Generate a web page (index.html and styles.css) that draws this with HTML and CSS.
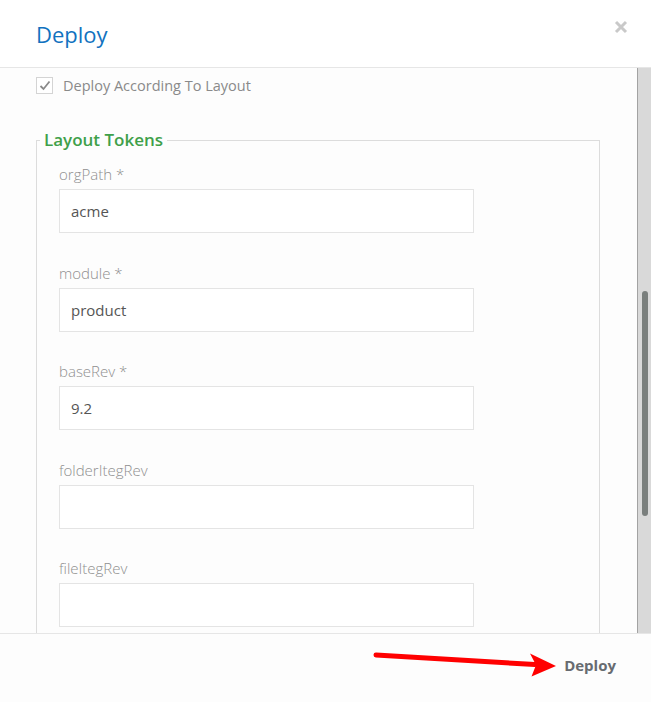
FILE: index.html
```html
<!DOCTYPE html>
<html>
<head>
<meta charset="utf-8">
<link rel="stylesheet" href="styles.css">
</head>
<body>
<div class="modal">
  <div class="header">
    <h1 class="title">Deploy</h1>
    <svg class="close" width="14" height="14" viewBox="0 0 14 14"><path d="M2 2L12 12M12 2L2 12" stroke="#c9c9c9" stroke-width="3" stroke-linecap="butt"/></svg>
  </div>
  <div class="body">
    <div class="content">
      <div class="check-row">
        <span class="checkbox"><svg width="12" height="11" viewBox="0 0 12 11"><path d="M1.5 6L4.5 9L10.5 1.5" fill="none" stroke="#8a8a8a" stroke-width="1.8"/></svg></span>
        <span class="check-label">Deploy According To Layout</span>
      </div>
      <fieldset class="tokens">
        <legend class="legend">Layout Tokens</legend>
        <div class="field"><label class="label">orgPath *</label><div class="input">acme</div></div>
        <div class="field"><label class="label">module *</label><div class="input">product</div></div>
        <div class="field"><label class="label">baseRev *</label><div class="input">9.2</div></div>
        <div class="field"><label class="label">folderItegRev</label><div class="input"></div></div>
        <div class="field"><label class="label">fileItegRev</label><div class="input"></div></div>
      </fieldset>
    </div>
    <div class="scrollbar"><div class="thumb"></div></div>
  </div>
  <div class="footer">
    <span class="deploy-btn">Deploy</span>
    <svg class="arrow" width="200" height="40" viewBox="0 0 200 40"><path d="M16 15L175 24.5" stroke="#ff0000" stroke-width="5" stroke-linecap="round"/><path d="M170 13.5L196 26L171.5 36.5L176 25Z" fill="#ff0000"/></svg>
  </div>
</div>
</body>
</html>
```
FILE: styles.css
```css
* { box-sizing: border-box; }
html, body { margin: 0; padding: 0; }
body {
  font-family: "Open Sans", "Liberation Sans", sans-serif;
  background: #fff;
  width: 651px;
  height: 702px;
  overflow: hidden;
}
.modal {
  position: relative;
  width: 651px;
  height: 702px;
  display: flex;
  flex-direction: column;
  background: #fff;
}
.header {
  height: 68px;
  flex: none;
  border-bottom: 1px solid #e6e6e6;
  display: flex;
  justify-content: space-between;
  align-items: flex-start;
  padding: 0 23px 0 36px;
}
.title {
  margin: 19px 0 0 0;
  font-size: 22px;
  line-height: 30px;
  font-weight: 400;
  color: #1172bf;
}
.close { margin-top: 20px; }
.body {
  flex: 1;
  display: flex;
  overflow: hidden;
  background: #fdfdfd;
}
.content {
  flex: 1;
  padding: 9px 0 0 36px;
  overflow: hidden;
}
.check-row {
  display: flex;
  align-items: center;
  height: 17px;
}
.checkbox {
  width: 17px;
  height: 17px;
  border: 1px solid #d4d4d4;
  background: #fff;
  display: flex;
  align-items: center;
  justify-content: center;
}
.check-label {
  margin-left: 10px;
  font-size: 14.5px;
  color: #8a8a8a;
  line-height: 20px;
}
.tokens {
  margin: 35px 0 0 0;
  width: 564px;
  border: 1px solid #dcdcdc;
  padding: 13px 22px 40px 22px;
}
.legend {
  margin-left: -19px;
  padding: 0 4px;
  font-size: 17px;
  line-height: 22px;
  font-weight: 600;
  color: #3fa04a;
}
.field { margin-bottom: 29.5px; }
.label {
  display: block;
  font-size: 15px;
  line-height: 20px;
  font-weight: 300;
  color: #8f8f8f;
  margin-bottom: 5px;
}
.input {
  width: 415px;
  height: 44px;
  border: 1px solid #e4e4e4;
  background: #fff;
  padding-left: 11px;
  font-size: 15px;
  line-height: 42px;
  color: #555;
}
.scrollbar {
  width: 14px;
  flex: none;
  background: #d9d9d9;
  border-left: 1px solid #a3a3a3;
  position: relative;
}
.thumb {
  position: absolute;
  left: 4px;
  top: 223px;
  width: 6px;
  height: 225px;
  border-radius: 3px;
  background: #7a7f7d;
}
.footer {
  position: relative;
  height: 69px;
  flex: none;
  border-top: 1px solid #e6e6e6;
  background: #fdfdfd;
  display: flex;
  justify-content: flex-end;
  align-items: flex-start;
  padding-right: 35px;
}
.deploy-btn {
  margin-top: 20px;
  font-size: 15px;
  line-height: 22px;
  font-weight: 700;
  color: #676b70;
}
.arrow {
  position: absolute;
  left: 360px;
  top: 6px;
}
```
